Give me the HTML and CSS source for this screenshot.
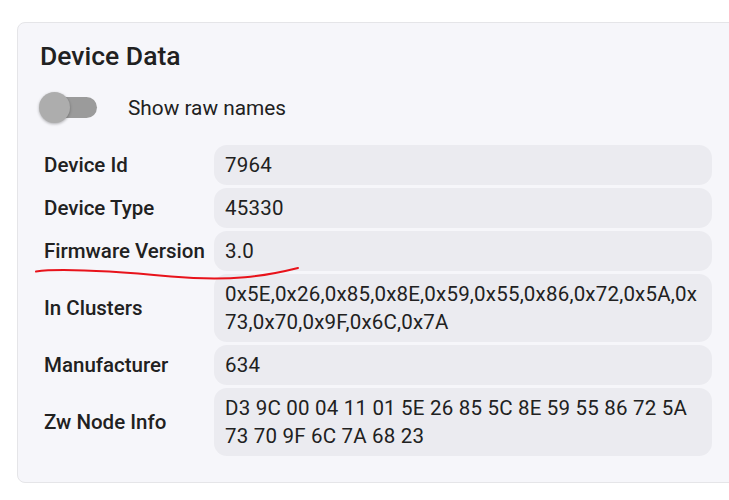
FILE: index.html
```html
<!DOCTYPE html>
<html>
<head>
<meta charset="utf-8">
<link rel="stylesheet" href="styles.css">
</head>
<body>
<div class="card">
  <h2 class="title">Device Data</h2>
  <div class="toggle-row">
    <span class="switch"><span class="track"></span><span class="thumb"></span></span>
    <span class="toggle-label">Show raw names</span>
  </div>
  <div class="grid">
    <div class="label">Device Id</div>
    <div class="value">7964</div>
    <div class="label">Device Type</div>
    <div class="value">45330</div>
    <div class="label">Firmware Version</div>
    <div class="value">3.0</div>
    <div class="label">In Clusters</div>
    <div class="value breakall">0x5E,0x26,0x85,0x8E,0x59,0x55,0x86,0x72,0x5A,0x73,0x70,0x9F,0x6C,0x7A</div>
    <div class="label">Manufacturer</div>
    <div class="value">634</div>
    <div class="label">Zw Node Info</div>
    <div class="value">D3 9C 00 04 11 01 5E 26 85 5C 8E 59 55 86 72 5A 73 70 9F 6C 7A 68 23</div>
  </div>
  <svg class="scribble" width="300" height="20" viewBox="0 0 300 20">
    <path d="M35 10.5 C 60 7, 110 10, 170 15.5 S 265 15, 297 7" fill="none" stroke="#e8131b" stroke-width="2" stroke-linecap="round"/>
  </svg>
</div>
</body>
</html>
```

FILE: styles.css
```css
html, body {
  margin: 0;
  padding: 0;
  background: #ffffff;
  overflow: hidden;
}
body {
  font-family: Roboto, "Noto Sans", sans-serif;
  color: #212121;
  width: 729px;
  height: 500px;
}
.card {
  position: relative;
  margin: 22px 0 0 17px;
  width: 740px;
  box-sizing: border-box;
  background: #f6f6fa;
  border: 1px solid #e5e5e8;
  border-radius: 8px;
  padding: 17px 0 26px 22px;
}
.title {
  margin: 0;
  font-size: 26.5px;
  font-weight: 500;
  line-height: 32px;
  color: #212121;
}
.toggle-row {
  display: flex;
  align-items: center;
  margin-top: 20px;
  height: 31px;
}
.switch {
  position: relative;
  width: 58px;
  height: 31px;
  margin-left: -1px;
}
.track {
  position: absolute;
  left: 14px;
  top: 5px;
  width: 44px;
  height: 21px;
  border-radius: 11px;
  background: #9b9b9b;
}
.thumb {
  position: absolute;
  left: 0;
  top: 0;
  width: 31px;
  height: 31px;
  border-radius: 50%;
  background: #adadad;
  box-shadow: 0 1px 3px rgba(0,0,0,0.3);
}
.toggle-label {
  margin-left: 31px;
  font-size: 20.8px;
  line-height: 28px;
}
.grid {
  display: grid;
  grid-template-columns: 174px 498px;
  row-gap: 3px;
  margin-top: 22px;
}
.label {
  display: flex;
  align-items: center;
  padding-left: 4px;
  font-size: 20.5px;
  font-weight: 500;
  line-height: 28px;
}
.value {
  box-sizing: border-box;
  background: #ebebf0;
  border-radius: 13px;
  padding: 6px 9px 6px 11px;
  font-size: 20.5px;
  letter-spacing: 0.2px;
  line-height: 28px;
  min-height: 40px;
}
.breakall {
  word-break: break-all;
}
.scribble {
  position: absolute;
  left: -17px;
  top: 238px;
  overflow: visible;
}
```
